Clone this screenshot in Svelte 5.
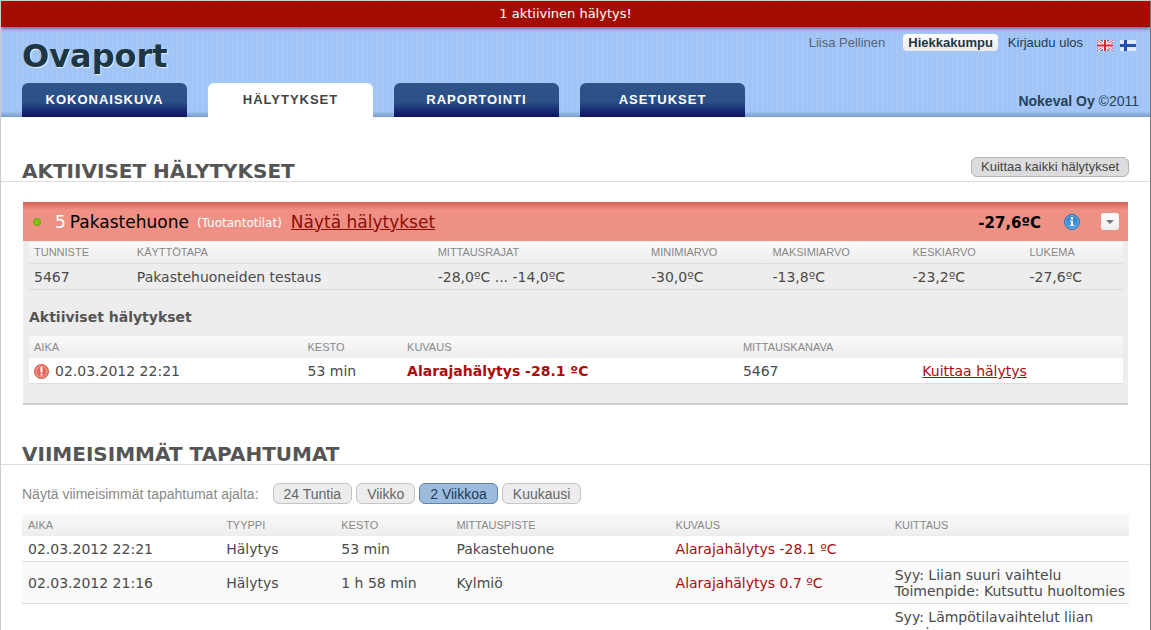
<script>
	const tabs = ['Kokonaiskuva', 'Hälytykset', 'Raportointi', 'Asetukset'];
	let activeTab = $state('Hälytykset');

	const ranges = ['24 Tuntia', 'Viikko', '2 Viikkoa', 'Kuukausi'];
	let activeRange = $state('2 Viikkoa');

	const events = [
		{ time: '02.03.2012 22:21', type: 'Hälytys', duration: '53 min', point: 'Pakastehuone', desc: 'Alarajahälytys -28.1 ºC', ack: [] },
		{ time: '02.03.2012 21:16', type: 'Hälytys', duration: '1 h 58 min', point: 'Kylmiö', desc: 'Alarajahälytys 0.7 ºC', ack: ['Syy: Liian suuri vaihtelu', 'Toimenpide: Kutsuttu huoltomies'] },
		{ time: '', type: '', duration: '', point: '', desc: '', ack: ['Syy: Lämpötilavaihtelut liian', 'suuria'] }
	];
</script>

<div class="page">
	<div class="alert-bar">1 aktiivinen hälytys!</div>

	<header>
		<div class="top">
			<h1>Ovaport</h1>
			<div class="user">
				<span class="name">Liisa Pellinen</span>
				<button class="site">Hiekkakumpu</button>
				<a class="logout" href="#logout">Kirjaudu ulos</a>
				<a class="flag" href="#en" aria-label="English">
					<svg width="16" height="11" viewBox="0 0 16 11">
						<rect width="16" height="11" fill="#5f74b8" />
						<path d="M0 0L16 11M16 0L0 11" stroke="#fff" stroke-width="3" />
						<path d="M0 0L16 11M16 0L0 11" stroke="#d8404c" stroke-width="1" />
						<path d="M8 0V11M0 5.5H16" stroke="#fff" stroke-width="4" />
						<path d="M8 0V11M0 5.5H16" stroke="#dc2435" stroke-width="2" />
					</svg>
				</a>
				<a class="flag" href="#fi" aria-label="Suomi">
					<svg width="16" height="11" viewBox="0 0 16 11">
						<rect width="16" height="11" fill="#dfeafb" />
						<path d="M5.5 0V11M0 5.5H16" stroke="#2450b4" stroke-width="3" />
					</svg>
				</a>
			</div>
		</div>
		<div class="bottom">
			<nav>
				{#each tabs as tab}
					<button class="tab" class:active={tab === activeTab} onclick={() => (activeTab = tab)}>{tab}</button>
				{/each}
			</nav>
			<div class="copyright"><b>Nokeval Oy</b> ©2011</div>
		</div>
	</header>

	<main>
		<div class="section-head first">
			<h2>Aktiiviset hälytykset</h2>
			<button class="btn ack-all">Kuittaa kaikki hälytykset</button>
		</div>

		<section class="panel">
			<div class="panel-head">
				<span class="led"></span>
				<span class="num">5</span>
				<span class="room">Pakastehuone</span>
				<span class="group">(Tuotantotilat)</span>
				<a class="show" href="#alarms">Näytä hälytykset</a>
				<span class="reading">-27,6ºC</span>
				<svg class="info" width="16" height="16" viewBox="0 0 16 16">
					<defs>
						<linearGradient id="blue" x1="0" y1="0" x2="0" y2="1">
							<stop offset="0" stop-color="#2f7fcc" />
							<stop offset="1" stop-color="#4aa0e8" />
						</linearGradient>
					</defs>
					<circle cx="8" cy="8" r="7.5" fill="url(#blue)" stroke="#2a6cb4" />
					<circle cx="8" cy="8" r="6.5" fill="none" stroke="#6fb0e8" />
					<circle cx="8" cy="4.3" r="1.3" fill="#fff" />
					<path d="M6 6.5H9V11H10.3V12H5.8V11H7V7.5H6Z" fill="#fff" />
				</svg>
				<button class="toggle" aria-label="Avaa">
					<svg width="8" height="4" viewBox="0 0 8 4"><path d="M0 0H8L4 4Z" fill="#777" /></svg>
				</button>
			</div>

			<div class="panel-body">
				<table class="point">
					<colgroup>
						<col style:width="9.4%" /><col style:width="27.5%" /><col style:width="19.5%" /><col style:width="11.1%" />
						<col style:width="12.8%" /><col style:width="10.7%" /><col style:width="9%" />
					</colgroup>
					<thead>
						<tr><th>Tunniste</th><th>Käyttötapa</th><th>Mittausrajat</th><th>Minimiarvo</th><th>Maksimiarvo</th><th>Keskiarvo</th><th>Lukema</th></tr>
					</thead>
					<tbody>
						<tr><td>5467</td><td>Pakastehuoneiden testaus</td><td>-28,0ºC ... -14,0ºC</td><td>-30,0ºC</td><td>-13,8ºC</td><td>-23,2ºC</td><td>-27,6ºC</td></tr>
					</tbody>
				</table>

				<h3>Aktiiviset hälytykset</h3>

				<table class="alarms">
					<colgroup>
						<col style:width="25%" /><col style:width="9.1%" /><col style:width="30.7%" /><col style:width="16.4%" /><col style:width="18.8%" />
					</colgroup>
					<thead>
						<tr><th>Aika</th><th>Kesto</th><th>Kuvaus</th><th>Mittauskanava</th><th></th></tr>
					</thead>
					<tbody>
						<tr>
							<td>
								<div class="when">
									<svg width="15" height="15" viewBox="0 0 15 15">
										<circle cx="7.5" cy="7.5" r="7" fill="#e4685a" stroke="#d9584c" />
										<circle cx="7.5" cy="7.5" r="5.5" fill="none" stroke="#f6b0a4" />
										<path d="M6.5 3H8.5V8.5H6.5ZM6.5 9.7H8.5V11.5H6.5Z" fill="#fff" />
									</svg>
									02.03.2012 22:21
								</div>
							</td>
							<td>53 min</td>
							<td class="red"><b>Alarajahälytys -28.1 ºC</b></td>
							<td>5467</td>
							<td><a href="#ack">Kuittaa hälytys</a></td>
						</tr>
					</tbody>
				</table>
			</div>
		</section>

		<div class="section-head">
			<h2>Viimeisimmät tapahtumat</h2>
		</div>

		<div class="filter">
			<span>Näytä viimeisimmät tapahtumat ajalta:</span>
			{#each ranges as range}
				<button class="btn" class:selected={range === activeRange} onclick={() => (activeRange = range)}>{range}</button>
			{/each}
		</div>

		<div class="events-wrap">
			<table class="events">
				<colgroup>
					<col style:width="17.9%" /><col style:width="10.4%" /><col style:width="10.4%" /><col style:width="19.8%" />
					<col style:width="19.8%" /><col style:width="21.7%" />
				</colgroup>
				<thead>
					<tr><th>Aika</th><th>Tyyppi</th><th>Kesto</th><th>Mittauspiste</th><th>Kuvaus</th><th>Kuittaus</th></tr>
				</thead>
				<tbody>
					{#each events as e}
						<tr>
							<td>{e.time}</td>
							<td>{e.type}</td>
							<td>{e.duration}</td>
							<td>{e.point}</td>
							<td class="red">{e.desc}</td>
							<td class="ack">
								{#each e.ack as line}
									<div>{line}</div>
								{/each}
							</td>
						</tr>
					{/each}
				</tbody>
			</table>
		</div>
	</main>
</div>

<style>
	:global(body) {
		background: #fff;
	}

	.page {
		box-sizing: border-box;
		height: 100vh;
		overflow: hidden;
		border-top: 1px solid #ccc;
		border-left: 1px solid #ccc;
		border-right: 1px solid #777;
		font-family: Verdana, 'DejaVu Sans', sans-serif;
		font-size: 14px;
		color: #4a4a4a;
	}

	button {
		font-family: Arial, 'Liberation Sans', sans-serif;
		cursor: pointer;
	}

	.alert-bar {
		position: relative;
		height: 26px;
		padding-right: 20px;
		line-height: 26px;
		text-align: center;
		color: #fff;
		font-size: 13px;
		background: repeating-linear-gradient(45deg, #a80c00 0 2px, #9c0e02 2px 3px);
		box-shadow: 0 1px 4px rgba(0, 0, 0, 0.6);
	}

	header {
		height: 90px;
		display: flex;
		flex-direction: column;
		justify-content: space-between;
		background:
			linear-gradient(to top, rgba(60, 90, 140, 0.4), transparent 6px),
			repeating-linear-gradient(90deg, #a4c7f7 0 3px, #a0c4f5 3px 5px);
		font-family: Arial, 'Liberation Sans', sans-serif;
	}

	.top,
	.bottom {
		display: flex;
		justify-content: space-between;
		padding: 0 11px 0 21px;
	}

	h1 {
		margin: 11px 0 0;
		font-family: Verdana, 'DejaVu Sans', sans-serif;
		font-size: 32px;
		line-height: 36px;
		color: #1d3644;
		text-shadow: 1px 1px 1px #e8f2ff;
	}

	.user {
		display: flex;
		align-items: center;
		height: 17px;
		margin: 7px 3px 0 0;
		font-size: 13px;
		line-height: 17px;
	}

	.name {
		color: #56657a;
		margin-right: 18px;
	}

	.site {
		height: 17px;
		margin-right: 10px;
		padding: 0 5px;
		border: 0;
		border-radius: 4px;
		background: linear-gradient(#fff, #eaeaea);
		font-size: 13px;
		line-height: 17px;
		font-weight: bold;
		color: #1d3644;
	}

	.logout {
		margin-right: 14px;
		color: #1d3a54;
		text-decoration: none;
	}

	.flag {
		display: flex;
		margin-top: 5px;
	}

	.flag + .flag {
		margin-left: 7px;
	}

	nav {
		display: flex;
		gap: 21px;
	}

	.tab {
		width: 165px;
		height: 34px;
		padding: 0 0 2px;
		border: 0;
		border-radius: 6px 6px 0 0;
		background: linear-gradient(#2d5489, #2b4f88 55%, #0b1264);
		font-size: 13px;
		font-weight: bold;
		letter-spacing: 1px;
		text-transform: uppercase;
		color: #fff;
	}

	.tab.active {
		background: #fff;
		color: #444;
	}

	.copyright {
		line-height: 36px;
		height: 34px;
		font-size: 14px;
		color: #24425c;
	}

	.section-head {
		display: flex;
		justify-content: space-between;
		align-items: flex-end;
		height: 59px;
		padding: 0 21px;
		border-bottom: 1px solid #ddd;
	}

	.section-head.first {
		height: 64px;
	}

	h2 {
		margin: 0;
		font-size: 20px;
		line-height: 20px;
		text-transform: uppercase;
		color: #555;
	}

	.btn {
		height: 21px;
		padding: 0 10px;
		border: 1px solid #c4c4c4;
		border-radius: 6px;
		background: #ececec;
		font-size: 14px;
		line-height: 18px;
		color: #666;
	}

	.btn.selected {
		border-color: #5f84ad;
		background: #9cbcdd;
		color: #1d3a5c;
	}

	.btn.ack-all {
		height: 20px;
		margin-bottom: 4px;
		padding: 0 9px;
		border-color: #b4b4b4;
		background: #dcdcdc;
		font-size: 13px;
		color: #444;
	}

	.panel {
		margin: 20px 22px 0;
		border-bottom: 2px solid #ccc;
		background: #ededed;
	}

	.panel-head {
		display: flex;
		align-items: center;
		height: 39px;
		padding: 0 9px 0 10px;
		background: linear-gradient(#d46155, #ee9184 8px);
		font-size: 17px;
	}

	.led {
		width: 6px;
		height: 6px;
		margin-right: 14px;
		border: 1px solid #6f9a14;
		border-radius: 50%;
		background: #7cc80c;
	}

	.num {
		margin-right: 4px;
		color: #fff;
	}

	.room {
		margin-right: 8px;
		color: #000;
	}

	.group {
		margin-right: 9px;
		padding-top: 3px;
		font-size: 12px;
		color: #fff;
	}

	.show {
		color: #8c0c08;
	}

	.reading {
		margin-left: auto;
		padding-top: 2px;
		font-size: 15px;
		font-weight: bold;
		color: #000;
	}

	.info {
		margin: 0 21px 0 23px;
	}

	.toggle {
		display: flex;
		align-items: center;
		justify-content: center;
		width: 18px;
		height: 17px;
		padding: 0;
		border: 0;
		border-radius: 3px;
		background: linear-gradient(#fff, #eee);
	}

	.panel-body {
		padding: 0 5px 19px 6px;
	}

	table {
		width: 100%;
		table-layout: fixed;
		border-collapse: collapse;
	}

	th {
		height: 22px;
		padding: 0 5px;
		background: linear-gradient(#fafafa, #ededed);
		font-family: Arial, 'Liberation Sans', sans-serif;
		font-size: 11px;
		line-height: 12px;
		font-weight: normal;
		text-align: left;
		text-transform: uppercase;
		color: #888;
	}

	td {
		height: 24px;
		padding: 1px 5px 0;
		border-bottom: 1px solid #ddd;
		line-height: 16px;
		white-space: nowrap;
	}

	.point th {
		border-bottom: 1px solid #ddd;
	}

	h3 {
		margin: 18px 0 9px;
		font-size: 14px;
		line-height: 19px;
		color: #555;
	}

	.alarms td {
		background: #fff;
	}

	.when {
		display: flex;
		align-items: center;
		gap: 6px;
	}

	.red,
	td a {
		color: #a80c0c;
	}

	.filter {
		display: flex;
		align-items: center;
		gap: 4px;
		margin: 18px 21px 10px;
		font-family: Arial, 'Liberation Sans', sans-serif;
		font-size: 14px;
		line-height: 18px;
		color: #888;
	}

	.filter span {
		margin-right: 10px;
	}

	.events-wrap {
		margin: 0 21px;
	}

	.events th {
		padding: 0 6px;
	}

	.events td {
		padding: 1px 6px 0;
	}

	.events tr:nth-child(even) td {
		background: #f9f9f9;
	}

	.events .ack:has(div) {
		padding: 5px 0 4px 6px;
	}
</style>
